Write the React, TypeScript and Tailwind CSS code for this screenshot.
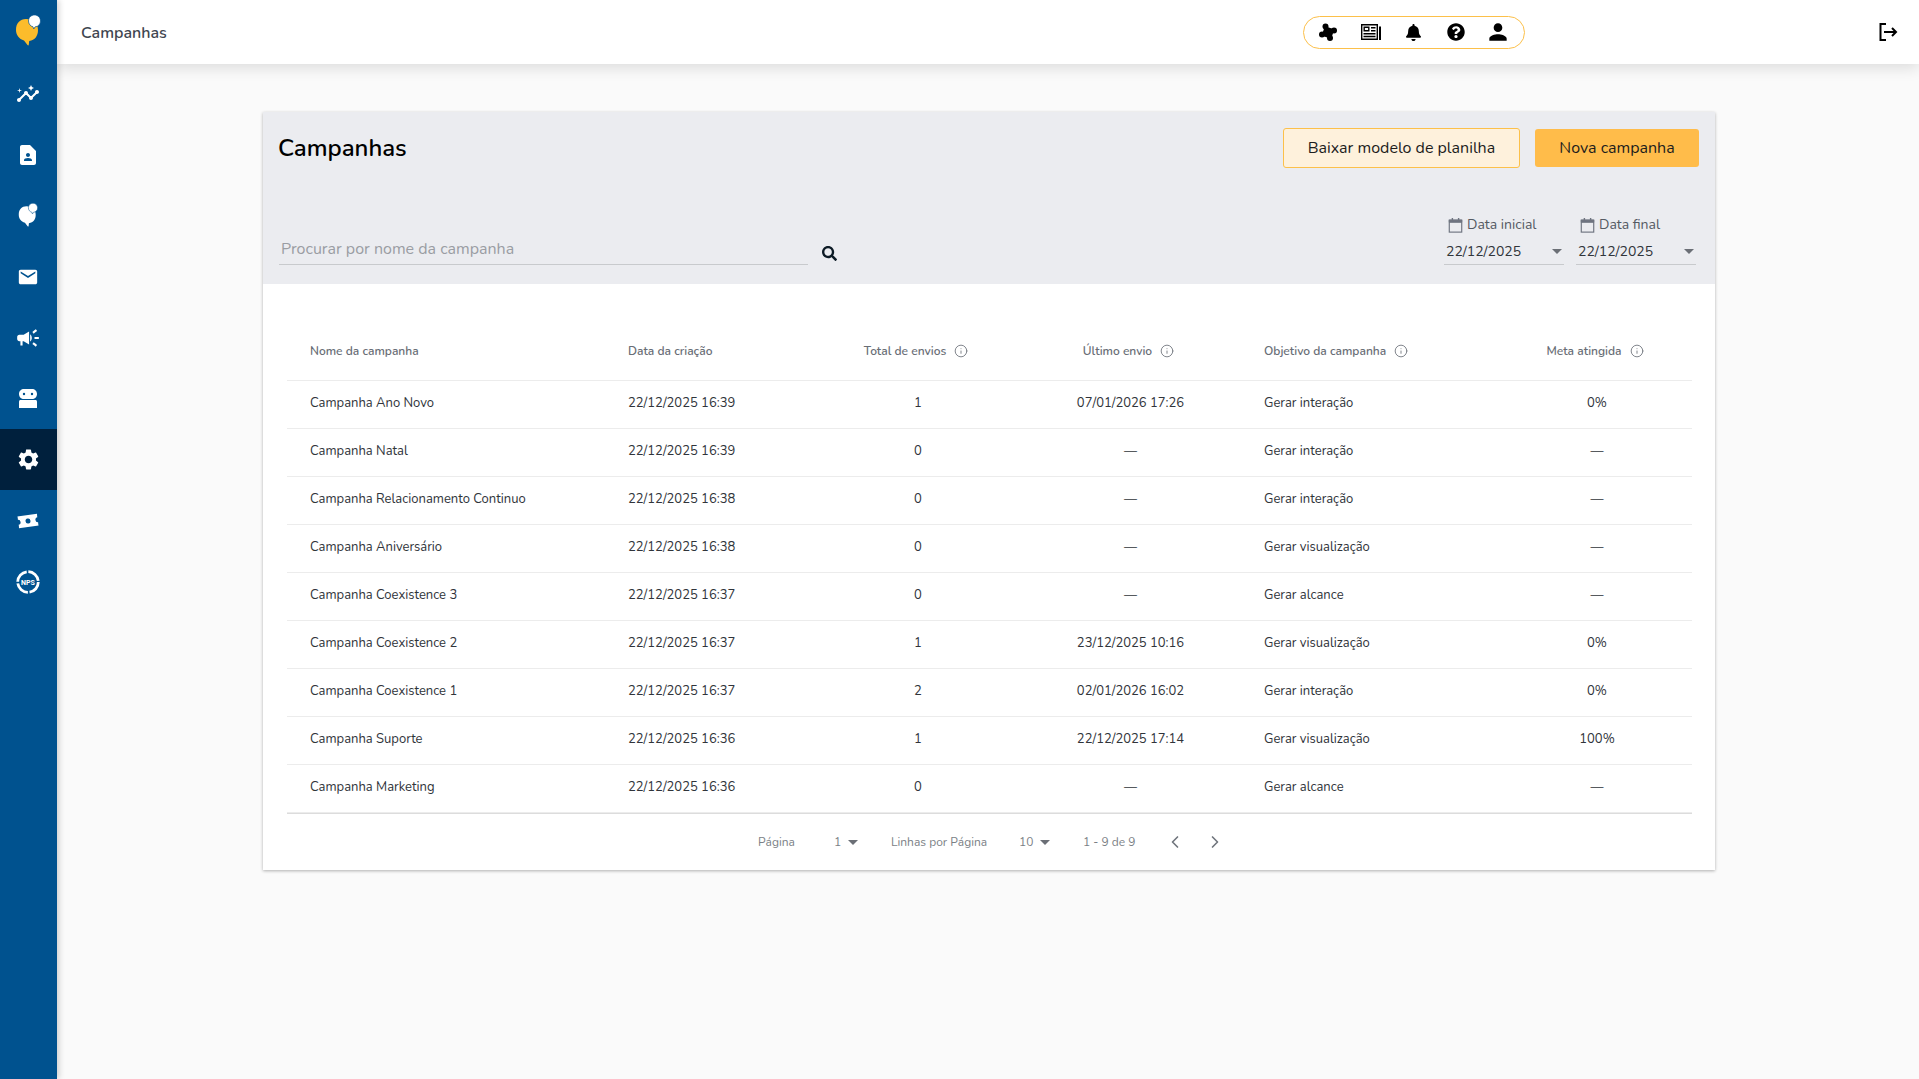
import { Info, ChevronLeft, ChevronRight } from "lucide-react";
import { FaBell, FaQuestionCircle, FaSearch } from "react-icons/fa";
import { MdInsights, MdContactPage, MdEmail, MdCampaign, MdSettings, MdPerson } from "react-icons/md";

const rows = [
  ["Campanha Ano Novo", "22/12/2025 16:39", "1", "07/01/2026 17:26", "Gerar interação", "0%"],
  ["Campanha Natal", "22/12/2025 16:39", "0", "—", "Gerar interação", "—"],
  ["Campanha Relacionamento Continuo", "22/12/2025 16:38", "0", "—", "Gerar interação", "—"],
  ["Campanha Aniversário", "22/12/2025 16:38", "0", "—", "Gerar visualização", "—"],
  ["Campanha Coexistence 3", "22/12/2025 16:37", "0", "—", "Gerar alcance", "—"],
  ["Campanha Coexistence 2", "22/12/2025 16:37", "1", "23/12/2025 10:16", "Gerar visualização", "0%"],
  ["Campanha Coexistence 1", "22/12/2025 16:37", "2", "02/01/2026 16:02", "Gerar interação", "0%"],
  ["Campanha Suporte", "22/12/2025 16:36", "1", "22/12/2025 17:14", "Gerar visualização", "100%"],
  ["Campanha Marketing", "22/12/2025 16:36", "0", "—", "Gerar alcance", "—"],
];

const gridCols = "grid grid-cols-[318px_211px_204px_221px_261px_190px] items-center";

function Bubble({ fill, dot }: { fill: string; dot: string }) {
  return (
    <svg viewBox="0 0 26 32" className="h-full w-full">
      <path
        d="M11 4C5 4 1 8 1 15c0 5 3 9 8 10.500l3.500 4.500c.6.7 1.200.4 1.300-.5l.4-3.500C20 25 23 21 23 15c0-7-5-11-12-11z"
        fill={fill}
      />
      <path
        d="M19.500 0C16 0 13.500 2.600 13.500 6c0 3 2 5.200 4.500 5.800l.8 2.200 1.200-2.100C23.500 11.600 25.500 9 25.500 6c0-3.400-2.600-6-6-6z"
        fill={dot}
        stroke="#00528f"
        strokeWidth="0.7"
      />
    </svg>
  );
}

function Caret({ className }: { className: string }) {
  return (
    <svg viewBox="0 0 10 5" className={className}>
      <path d="M0 0h10L5 5z" fill="currentColor" />
    </svg>
  );
}

function CalendarIcon() {
  return (
    <svg viewBox="0 0 16 18" className="h-[16px] w-[15px] text-[#6f7480]" fill="none" stroke="currentColor">
      <rect x="1" y="3.500" width="14" height="13.500" strokeWidth="1.300" />
      <path d="M1 6h14V3.500H1z" fill="currentColor" />
      <path d="M4.500 1v4M11.500 1v4" strokeWidth="1.600" />
    </svg>
  );
}

function DateField({ label }: { label: string }) {
  return (
    <div className="w-[120px]">
      <div className="flex items-center gap-[4px] pl-[4px] text-[14px] leading-[20px] text-[#555a63]">
        <CalendarIcon />
        {label}
      </div>
      <div className="mt-[4px] flex h-[26px] items-center justify-between border-b border-[#c8cacd] pl-[2px] pr-[2px] text-[14px] text-[#30343a]">
        22/12/2025
        <Caret className="h-[5px] w-[10px] text-[#6b6f76]" />
      </div>
    </div>
  );
}

function HeadCell({ label, center }: { label: string; center?: boolean }) {
  return (
    <div className={`flex items-center gap-[8px] ${center ? "justify-center pr-[4px]" : "pl-[23px]"}`}>
      {label}
      <Info className="h-[14px] w-[14px] text-[#70757d]" strokeWidth={1.500} />
    </div>
  );
}

export default function App() {
  const menu = [
    <MdInsights key="a" size={24} />,
    <MdContactPage key="b" size={24} />,
    <span key="c" className="block h-[25px] w-[20px]"><Bubble fill="#ffffff" dot="#ffffff" /></span>,
    <MdEmail key="d" size={22} />,
    <MdCampaign key="e" size={26} />,
    <svg key="f" viewBox="0 0 18 19" className="h-[19px] w-[18px]" fill="#ffffff">
      <path
        fillRule="evenodd"
        d="M5 0h8c2.800 0 5 2 5 5s-2.200 5-5 5H5c-2.800 0-5-2-5-5s2.200-5 5-5zm0 3.800a1.200 1.200 0 100 2.400 1.200 1.200 0 000-2.400zm8 0a1.200 1.200 0 100 2.400 1.200 1.200 0 000-2.400z"
      />
      <path d="M1.500 11h15c.8 0 1.500.7 1.500 1.500V19H0v-6.500C0 11.700.7 11 1.500 11z" />
    </svg>,
    <MdSettings key="g" size={25} />,
    <svg key="h" viewBox="0 0 20 16" className="h-[16px] w-[20px] -rotate-[8deg]" fill="#ffffff">
      <path
        fillRule="evenodd"
        d="M0 2h20v3.500a2.500 2.500 0 000 5V14H0v-3.500a2.500 2.500 0 000-5V2zm10 3.500a2.500 2.500 0 100 5 2.500 2.500 0 000-5z"
      />
    </svg>,
    <svg key="i" viewBox="0 0 24 24" className="h-[24px] w-[24px]">
      <circle cx="12" cy="12" r="10.300" fill="none" stroke="#ffffff" strokeWidth="2.800" strokeDasharray="14.500 1.700" />
      <text x="12" y="14.500" textAnchor="middle" fontSize="7" fontWeight="700" fill="#ffffff" fontFamily="Roboto, sans-serif">NPS</text>
    </svg>,
  ];

  return (
    <div className="flex h-[1079px] w-[1919px] overflow-hidden bg-[#fafafa] font-['Nunito','Lato','Noto_Sans',sans-serif] text-[#30343a]">
      <aside className="z-20 flex w-[57px] shrink-0 flex-col bg-[#00528f] shadow-[2px_0_6px_rgba(0,0,0,0.18)]">
        <div className="flex h-[63px] items-start justify-center pr-[1px] pt-[15px]">
          <span className="block h-[32px] w-[26px]"><Bubble fill="#fcbc2b" dot="#ffffff" /></span>
        </div>
        <nav className="flex flex-col text-white">
          {menu.map((icon, i) => (
            <div key={i} className={`flex h-[61px] items-center justify-center pr-[1px] ${i === 6 ? "bg-[#00203d]" : ""}`}>
              {icon}
            </div>
          ))}
        </nav>
      </aside>

      <div className="flex min-w-0 flex-1 flex-col">
        <header className="z-10 flex h-[64px] shrink-0 items-center bg-white pl-[24px] pr-[21px] shadow-[0_4px_14px_rgba(0,0,0,0.12)]">
          <span className="pt-[1px] text-[16px] font-semibold text-[#404650]">Campanhas</span>
          <div className="ml-[1136px] flex h-[33px] w-[222px] items-center justify-between rounded-full border border-[#fcc04a] bg-white pl-[15px] pr-[17px] text-black">
            <svg viewBox="0 0 18 18" className="h-[18px] w-[18px]" fill="#000000">
              <rect x="4" y="4.500" width="10" height="10" rx="1" transform="rotate(18 9 9.500)" />
              <circle cx="6.500" cy="3.500" r="3" />
              <circle cx="15" cy="7.500" r="3" />
              <circle cx="11" cy="15" r="3" />
              <circle cx="3" cy="11.500" r="3" />
            </svg>
            <svg viewBox="0 0 20 16" className="h-[16px] w-[20px]" fill="#000000">
              <path fillRule="evenodd" d="M0 0h17v16H0V0zm1.400 1.400v13.200h14.200V1.400H1.400z" />
              <path fillRule="evenodd" d="M2.500 2.500h6v5h-6v-5zm1.400 1.400v2.200h3.200V3.900H3.900z" />
              <path d="M10 3h4.500v1.400H10zM10 6h4.500v1.400H10zM2.500 9h12v1.400h-12zM2.500 11.800h12v1.400h-12zM18 2.500h2V16h-2z" />
            </svg>
            <FaBell size={17} />
            <FaQuestionCircle size={18} />
            <MdPerson size={26} className="-mx-[4px]" />
          </div>
          <svg viewBox="0 0 20 20" className="ml-auto h-[20px] w-[20px]" fill="none" stroke="#000000" strokeWidth="2">
            <path d="M8 2H2.500v16H8" />
            <path d="M6 10h12M14 6l4 4-4 4" />
          </svg>
        </header>

        <main className="pl-[206px] pt-[48px]">
          <section className="w-[1452px] bg-white shadow-[0_1px_3px_rgba(0,0,0,0.3)]">
            <div className="h-[172px] bg-[#ebecf0] px-[15px] pt-[16px]">
              <div className="flex items-start justify-between">
                <h1 className="pt-[2px] text-[24px] font-semibold leading-[36px] text-black">Campanhas</h1>
                <div className="flex items-center gap-[15px] pr-[1px]">
                  <button className="h-[40px] w-[237px] rounded-[3px] border border-[#fcc04a] bg-[#fef1dc] text-[16px] font-normal text-[#1d1d1d]">
                    Baixar modelo de planilha
                  </button>
                  <button className="h-[38px] w-[164px] rounded-[3px] bg-[#ffbc4a] text-[16px] font-normal text-[#1d1d1d]">
                    Nova campanha
                  </button>
                </div>
              </div>
              <div className="mt-[47px] flex items-end justify-between">
                <div className="flex items-end">
                  <div className="ml-[1px] h-[34px] w-[529px] border-b border-[#c8cacd] pl-[2px] pt-[5px] text-[16px] leading-[26px] text-[#9a9da3]">
                    Procurar por nome da campanha
                  </div>
                  <FaSearch size={15} className="mb-[4px] ml-[14px] text-[#0d1b26]" />
                </div>
                <div className="flex gap-[12px] pr-[4px]">
                  <DateField label="Data inicial" />
                  <DateField label="Data final" />
                </div>
              </div>
            </div>

            <div className="pl-[24px] pr-[23px] pt-[49px]">
              <div className={`${gridCols} h-[48px] border-b border-[#ececec] pb-[11px] text-[12px] font-semibold text-[#696e76]`}>
                <div className="pl-[23px]">Nome da campanha</div>
                <div className="pl-[23px]">Data da criação</div>
                <HeadCell label="Total de envios" center />
                <HeadCell label="Último envio" center />
                <HeadCell label="Objetivo da campanha" />
                <HeadCell label="Meta atingida" center />
              </div>
              {rows.map((r) => (
                <div key={r[0]} className={`${gridCols} h-[48px] border-b border-[#ececec] pb-[2px] text-[13px] text-[#30343a]`}>
                  <div className="pl-[23px]">{r[0]}</div>
                  <div className="pl-[23px]">{r[1]}</div>
                  <div className="text-center">{r[2]}</div>
                  <div className="text-center">{r[3]}</div>
                  <div className="pl-[23px]">{r[4]}</div>
                  <div className="text-center">{r[5]}</div>
                </div>
              ))}
              <div className="flex h-[57px] items-center border-t border-[#dcdcdc] pl-[471px] text-[12px] text-[#7b7f86]">
                <span className="w-[76px]">Página</span>
                <span className="flex w-[57px] items-center gap-[7px]">1<Caret className="h-[5px] w-[10px] text-[#6b6f76]" /></span>
                <span className="w-[128px]">Linhas por Página</span>
                <span className="flex w-[64px] items-center gap-[7px]">10<Caret className="h-[5px] w-[10px] text-[#6b6f76]" /></span>
                <span className="w-[82px]">1 - 9 de 9</span>
                <ChevronLeft className="h-[20px] w-[20px] text-[#70757d]" />
                <ChevronRight className="ml-[20px] h-[20px] w-[20px] text-[#70757d]" />
              </div>
            </div>
          </section>
        </main>
      </div>
    </div>
  );
}
